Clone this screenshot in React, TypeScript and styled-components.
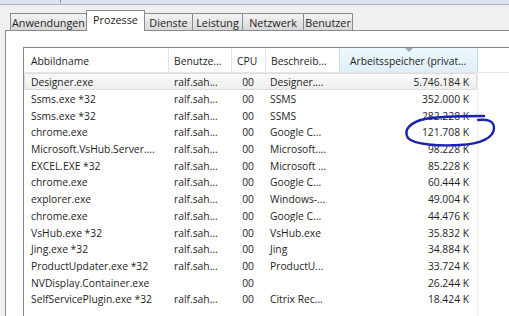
import React from 'react';
import styled, { createGlobalStyle, css } from 'styled-components';

type Proc = [string, string, string, string, string];

const processes: Proc[] = [
    ['Designer.exe', 'ralf.sah...', '00', 'Designer....', '5.746.184 K'],
    ['Ssms.exe *32', 'ralf.sah...', '00', 'SSMS', '352.000 K'],
    ['Ssms.exe *32', 'ralf.sah...', '00', 'SSMS', '282.228 K'],
    ['chrome.exe', 'ralf.sah...', '00', 'Google C...', '121.708 K'],
    ['Microsoft.VsHub.Server....', 'ralf.sah...', '00', 'Microsoft....', '98.228 K'],
    ['EXCEL.EXE *32', 'ralf.sah...', '00', 'Microsoft ...', '85.228 K'],
    ['chrome.exe', 'ralf.sah...', '00', 'Google C...', '60.444 K'],
    ['explorer.exe', 'ralf.sah...', '00', 'Windows-...', '49.004 K'],
    ['chrome.exe', 'ralf.sah...', '00', 'Google C...', '44.476 K'],
    ['VsHub.exe *32', 'ralf.sah...', '00', 'VsHub.exe', '35.832 K'],
    ['Jing.exe *32', 'ralf.sah...', '00', 'Jing', '34.884 K'],
    ['ProductUpdater.exe *32', 'ralf.sah...', '00', 'ProductU...', '33.724 K'],
    ['NVDisplay.Container.exe', '', '00', '', '26.244 K'],
    ['SelfServicePlugin.exe *32', 'ralf.sah...', '00', 'Citrix Rec...', '18.424 K'],
];

const tabs = [
    { label: 'Anwendungen', width: 77 },
    { label: 'Prozesse', width: 59, active: true },
    { label: 'Dienste', width: 49 },
    { label: 'Leistung', width: 51 },
    { label: 'Netzwerk', width: 62 },
    { label: 'Benutzer', width: 50 },
];

const columns = [
    { label: 'Abbildname', pad: 7 },
    { label: 'Benutze...', pad: 5 },
    { label: 'CPU', pad: 5 },
    { label: 'Beschreib...', pad: 5 },
    { label: 'Arbeitsspeicher (privat...', pad: 10, sorted: true },
];

export default function App() {
    return (
        <>
            <GlobalStyle />
            <Window>
                <TopBar>
                    <TopTick />
                </TopBar>
                <TabRow>
                    {tabs.map((t) => (
                        <Tab key={t.label} $width={t.width} $active={!!t.active}>
                            {t.label}
                        </Tab>
                    ))}
                </TabRow>
                <Panel>
                    <ListView>
                        <Header>
                            {columns.map((c) => (
                                <HeaderCell key={c.label} $pad={c.pad} $sorted={!!c.sorted}>
                                    {c.sorted && (
                                        <SortArrow width="8" height="4" viewBox="0 0 8 4">
                                            <path d="M0 0 L8 0 L4 4 Z" fill="#9aa8b8" />
                                        </SortArrow>
                                    )}
                                    {c.label}
                                </HeaderCell>
                            ))}
                            <HeaderFiller />
                        </Header>
                        <Body>
                            {processes.map((p, i) => (
                                <Row key={i} $hot={i === 0}>
                                    <Cell $padLeft={6}>{p[0]}</Cell>
                                    <Cell $padLeft={5}>{p[1]}</Cell>
                                    <Cell $right $padRight={12}>{p[2]}</Cell>
                                    <Cell $padLeft={4}>{p[3]}</Cell>
                                    <Cell $right $padRight={7}>{p[4]}</Cell>
                                </Row>
                            ))}
                        </Body>
                    </ListView>
                </Panel>
                <Scribble width="509" height="316" viewBox="0 0 509 316">
                    <path
                        d="M484 116 C470 116, 440 116, 425 119 C410 122, 403 130, 408 138 C414 145, 440 146, 460 145 C480 144, 494 138, 494 128 C494 121, 488 119, 478 120"
                        fill="none"
                        stroke="#1b22b0"
                        strokeWidth="2.4"
                        strokeLinecap="round"
                    />
                </Scribble>
            </Window>
        </>
    );
}

const GlobalStyle = createGlobalStyle`
  html, body {
    margin: 0;
    padding: 0;
    background: #f0f0f0;
  }
  body {
    font-family: "Open Sans", "Noto Sans", sans-serif;
    font-size: 10.3px;
    color: #1e1e1e;
  }
`;

const Window = styled.div`
  position: relative;
  width: 509px;
  height: 316px;
  overflow: hidden;
  background: #f0f0f0;
  display: flex;
  flex-direction: column;
`;

const TopBar = styled.div`
  height: 4px;
  flex: none;
  background: #dbe4ef;
  border-bottom: 1px solid #a9b3bf;
  padding-left: 60px;
`;

const TopTick = styled.div`
  width: 1px;
  height: 3px;
  background: #8d96a2;
`;

const TabRow = styled.div`
  flex: none;
  height: 25px;
  display: flex;
  align-items: flex-end;
  padding-left: 10px;
  position: relative;
  z-index: 1;
  font-size: 10.8px;
`;

const Tab = styled.div<{ $width: number; $active: boolean }>`
  box-sizing: border-box;
  width: ${(p) => p.$width}px;
  height: 17px;
  margin-left: -1px;
  padding-top: 1px;
  display: flex;
  align-items: center;
  justify-content: center;
  white-space: nowrap;
  border: 1px solid #898c95;
  border-bottom: none;
  background: linear-gradient(#f4f4f4, #e6e6e6 50%, #d7d7d7);
  &:first-child {
    margin-left: 0;
  }
  ${(p) =>
    p.$active &&
    css`
      height: 21px;
      margin-bottom: -1px;
      padding-top: 0;
      padding-bottom: 3px;
      background: #fff;
      position: relative;
      z-index: 2;
    `}
`;

const Panel = styled.div`
  flex: 1;
  margin-left: 5px;
  border-top: 1px solid #898c95;
  border-left: 1px solid #898c95;
  background: #fff;
  padding: 16px 0 0 17px;
  overflow: hidden;
`;

const ListView = styled.div`
  width: 640px;
  height: 100%;
  border-left: 1px solid #828790;
  border-top: 1px solid #828790;
`;

const Header = styled.div`
  display: grid;
  grid-template-columns: 145px 63px 34px 74px 138px 1fr;
  height: 24px;
  border-bottom: 1px solid #e3e5e8;
`;

const HeaderCell = styled.div<{ $pad: number; $sorted: boolean }>`
  position: relative;
  display: flex;
  align-items: center;
  padding-left: ${(p) => p.$pad}px;
  padding-top: 2px;
  border-right: 1px solid #e2e3e5;
  white-space: nowrap;
  overflow: hidden;
  ${(p) =>
    p.$sorted &&
    css`
      background: linear-gradient(#eef7fd, #dfeffa);
      border-right-color: #c4dcec;
      border-left: 1px solid #c4dcec;
      margin-left: -1px;
    `}
`;

const HeaderFiller = styled.div``;

const SortArrow = styled.svg`
  position: absolute;
  top: 0;
  left: 65px;
`;

const Body = styled.div`
  width: 453px;
  height: 100%;
  border-right: 1px solid #ececec;
`;

const Row = styled.div<{ $hot: boolean }>`
  box-sizing: border-box;
  display: grid;
  grid-template-columns: 144px 63px 34px 74px 136px;
  height: 16.7px;
  border: 1px solid transparent;
  border-radius: 2px;
  ${(p) =>
    p.$hot &&
    css`
      background: linear-gradient(#fafafa, #eeeeee);
      border-color: #dcdcdc;
    `}
`;

const Cell = styled.div<{ $padLeft?: number; $padRight?: number; $right?: boolean }>`
  display: flex;
  align-items: center;
  justify-content: ${(p) => (p.$right ? 'flex-end' : 'flex-start')};
  padding-left: ${(p) => p.$padLeft ?? 0}px;
  padding-right: ${(p) => p.$padRight ?? 0}px;
  padding-top: 2px;
  white-space: nowrap;
  overflow: hidden;
  line-height: 12px;
`;

const Scribble = styled.svg`
  position: absolute;
  top: 0;
  left: 0;
  pointer-events: none;
`;
